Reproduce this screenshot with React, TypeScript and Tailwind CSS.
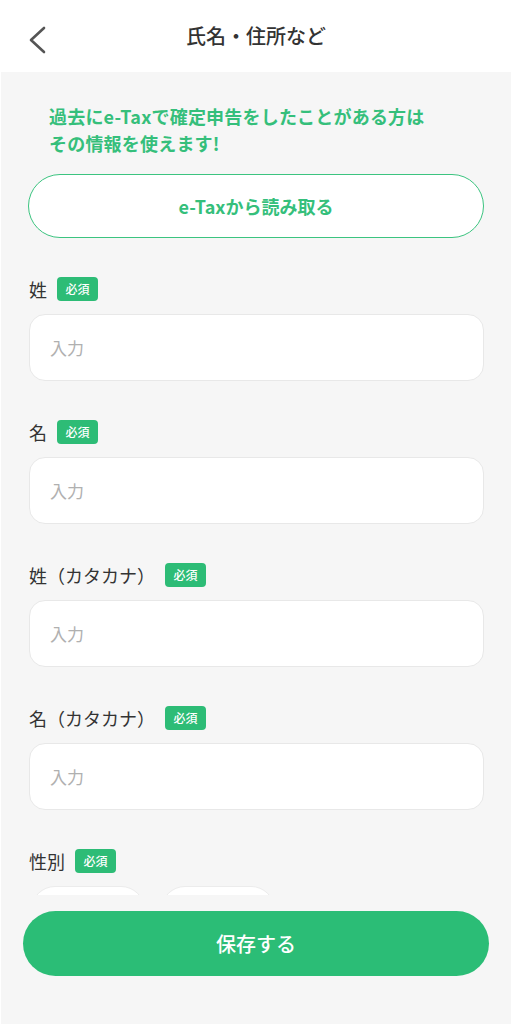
import React from 'react';

const fields = ['姓', '名', '姓（カタカナ）', '名（カタカナ）'];

function Badge() {
  return (
    <span className="flex h-[24px] w-[41px] items-center justify-center rounded-[4px] bg-[#2dbc76] text-[12px] font-medium leading-none text-white">
      必須
    </span>
  );
}

function FieldLabel({ label }: { label: string }) {
  return (
    <div className="flex h-[24px] items-center gap-[10px]">
      <span className="text-[18px] leading-none text-[#333]">{label}</span>
      <Badge />
    </div>
  );
}

export default function App() {
  return (
    <div
      className="flex h-[1024px] w-full flex-col overflow-hidden border-l border-white bg-[#f6f6f6]"
      style={{ fontFamily: '"Noto Sans CJK JP", "Noto Sans", sans-serif' }}
    >
      {/* Header */}
      <header className="relative flex h-[72px] shrink-0 items-center justify-center bg-white">
        <button className="absolute left-[21px] top-[20px] p-[4px]">
          <svg width="24" height="32" viewBox="0 0 24 32" fill="none">
            <polyline
              points="18,4 5,16 18,28"
              stroke="#555"
              strokeWidth="2.6"
              strokeLinecap="round"
              strokeLinejoin="round"
            />
          </svg>
        </button>
        <h1 className="text-[20px] font-medium text-[#333]">氏名・住所など</h1>
      </header>

      {/* Body */}
      <main className="flex-1 overflow-hidden px-[27px] pt-[31px]">
        <p className="pl-[21px] text-[18px] font-bold leading-[27px] tracking-[0.2px] text-[#35bf7b]">
          過去にe-Taxで確定申告をしたことがある方は
          <br />
          その情報を使えます!
        </p>
        <button className="mt-[17px] flex h-[64px] w-full items-center justify-center rounded-full border-[1.5px] border-[#3cc480] bg-white text-[18px] font-bold text-[#35bf7b]">
          e-Taxから読み取る
        </button>

        <div className="mt-[39px] flex flex-col gap-[39px] pl-[1px]">
          {fields.map((f) => (
            <div key={f} className="flex flex-col gap-[13px]">
              <FieldLabel label={f} />
              <div className="flex h-[67px] items-center rounded-[16px] border border-[#e8e8e8] bg-white pl-[20px]">
                <span className="text-[17px] text-[#b0b0b0]">入力</span>
              </div>
            </div>
          ))}
          <div className="flex flex-col gap-[13px]">
            <FieldLabel label="性別" />
            <div className="flex gap-[16px] pl-[2px]">
              <div className="h-[60px] w-[114px] rounded-[24px] border border-[#ececec] bg-white" />
              <div className="h-[60px] w-[114px] rounded-[24px] border border-[#ececec] bg-white" />
            </div>
          </div>
        </div>
      </main>

      {/* Footer */}
      <footer className="h-[129px] shrink-0 bg-[#f6f6f6] px-[22px] pt-[16px]">
        <button className="flex h-[65px] w-full items-center justify-center rounded-full bg-[#2bbd76] text-[20px] font-medium text-white">
          保存する
        </button>
      </footer>
    </div>
  );
}
